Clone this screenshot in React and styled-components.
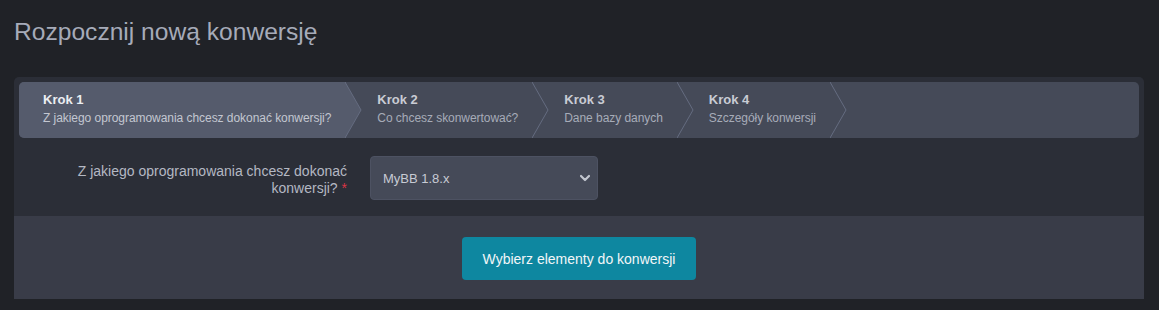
import React from 'react';
import styled, { createGlobalStyle } from 'styled-components';

const GlobalStyle = createGlobalStyle`
	html, body {
		margin: 0;
		padding: 0;
		background: #202227;
		font-family: 'Liberation Sans', Arial, sans-serif;
	}
`;

const Page = styled.div`
	padding: 17px 15px 0 14px;
`;

const Title = styled.h1`
	margin: 0 0 30px 0;
	font-size: 24.6px;
	font-weight: 400;
	line-height: 30px;
	color: #a6abb9;
`;

const Card = styled.div`
	background: #2b2e37;
	border-radius: 5px 5px 0 0;
	overflow: hidden;
`;

const StepsWrap = styled.div`
	padding: 5px 5px 0 5px;
`;

const Steps = styled.div`
	display: flex;
	height: 56px;
	background: #454a58;
	border-radius: 5px;
	overflow: hidden;
`;

const Step = styled.div`
	position: relative;
	display: flex;
	flex-direction: column;
	justify-content: center;
	padding: 0 15px 2px ${(p) => (p.first ? '24px' : '31px')};
	background: ${(p) => (p.active ? '#555b6c' : 'transparent')};
	z-index: ${(p) => (p.active ? 2 : 1)};
`;

const StepTitle = styled.div`
	font-size: 13px;
	font-weight: 700;
	line-height: 18px;
	color: ${(p) => (p.active ? '#eceef2' : '#c9ccd4')};
`;

const StepSub = styled.div`
	font-size: 12px;
	line-height: 18px;
	letter-spacing: -0.05px;
	white-space: nowrap;
	color: ${(p) => (p.active ? '#c3c7d1' : '#a7acb8')};
`;

const Chevron = styled.svg`
	position: absolute;
	top: 0;
	right: -16px;
	width: 17px;
	height: 100%;
`;

const StepArrow = ({ active }) => (
	<Chevron viewBox="0 0 17 56" preserveAspectRatio="none">
		{active && <polygon points="0,0 16,28 0,56" fill="#555b6c" />}
		<polyline points="0,0 16,28 0,56" fill="none" stroke="#656c80" strokeWidth="1" />
	</Chevron>
);

const FormRow = styled.div`
	display: flex;
	align-items: flex-start;
	padding: 18px 0 16px 0;
`;

const Label = styled.label`
	flex: 0 0 333px;
	margin-right: 23px;
	padding-top: 7px;
	text-align: right;
	font-size: 14px;
	line-height: 17px;
	color: #b4b8c3;
`;

const Required = styled.span`
	color: #dc3545;
`;

const Select = styled.div`
	display: flex;
	align-items: center;
	justify-content: space-between;
	box-sizing: border-box;
	width: 228px;
	height: 44px;
	padding: 0 5px 0 12px;
	background: #454a58;
	border: 1px solid #4d5262;
	border-radius: 4px;
	font-size: 13px;
	color: #c7cbd4;
`;

const Footer = styled.div`
	display: flex;
	justify-content: center;
	padding: 21px 0 19px 0;
	background: #393c48;
`;

const Button = styled.button`
	width: 234px;
	height: 43px;
	border: none;
	border-radius: 4px;
	background: #0e87a0;
	color: #f2f6f8;
	font-family: 'Liberation Sans', Arial, sans-serif;
	font-size: 14px;
	cursor: pointer;
`;

const steps = [
	{ title: 'Krok 1', sub: 'Z jakiego oprogramowania chcesz dokonać konwersji?' },
	{ title: 'Krok 2', sub: 'Co chcesz skonwertować?' },
	{ title: 'Krok 3', sub: 'Dane bazy danych' },
	{ title: 'Krok 4', sub: 'Szczegóły konwersji' },
];

const App = () => {
	return (
		<Page>
			<GlobalStyle />
			<Title>Rozpocznij nową konwersję</Title>
			<Card>
				<StepsWrap>
					<Steps>
						{steps.map((s, i) => (
							<Step key={s.title} first={i === 0} active={i === 0}>
								<StepTitle active={i === 0}>{s.title}</StepTitle>
								<StepSub active={i === 0}>{s.sub}</StepSub>
								<StepArrow active={i === 0} />
							</Step>
						))}
					</Steps>
				</StepsWrap>
				<FormRow>
					<Label>
						Z jakiego oprogramowania chcesz dokonać
						<br />
						konwersji? <Required>*</Required>
					</Label>
					<Select>
						<span>MyBB 1.8.x</span>
						<svg width="14" height="14" viewBox="0 0 14 14">
							<polyline
								points="3,5 7,9 11,5"
								fill="none"
								stroke="#c3c7d0"
								strokeWidth="2.2"
								strokeLinecap="round"
								strokeLinejoin="round"
							/>
						</svg>
					</Select>
				</FormRow>
				<Footer>
					<Button>Wybierz elementy do konwersji</Button>
				</Footer>
			</Card>
		</Page>
	);
};

export default App;
